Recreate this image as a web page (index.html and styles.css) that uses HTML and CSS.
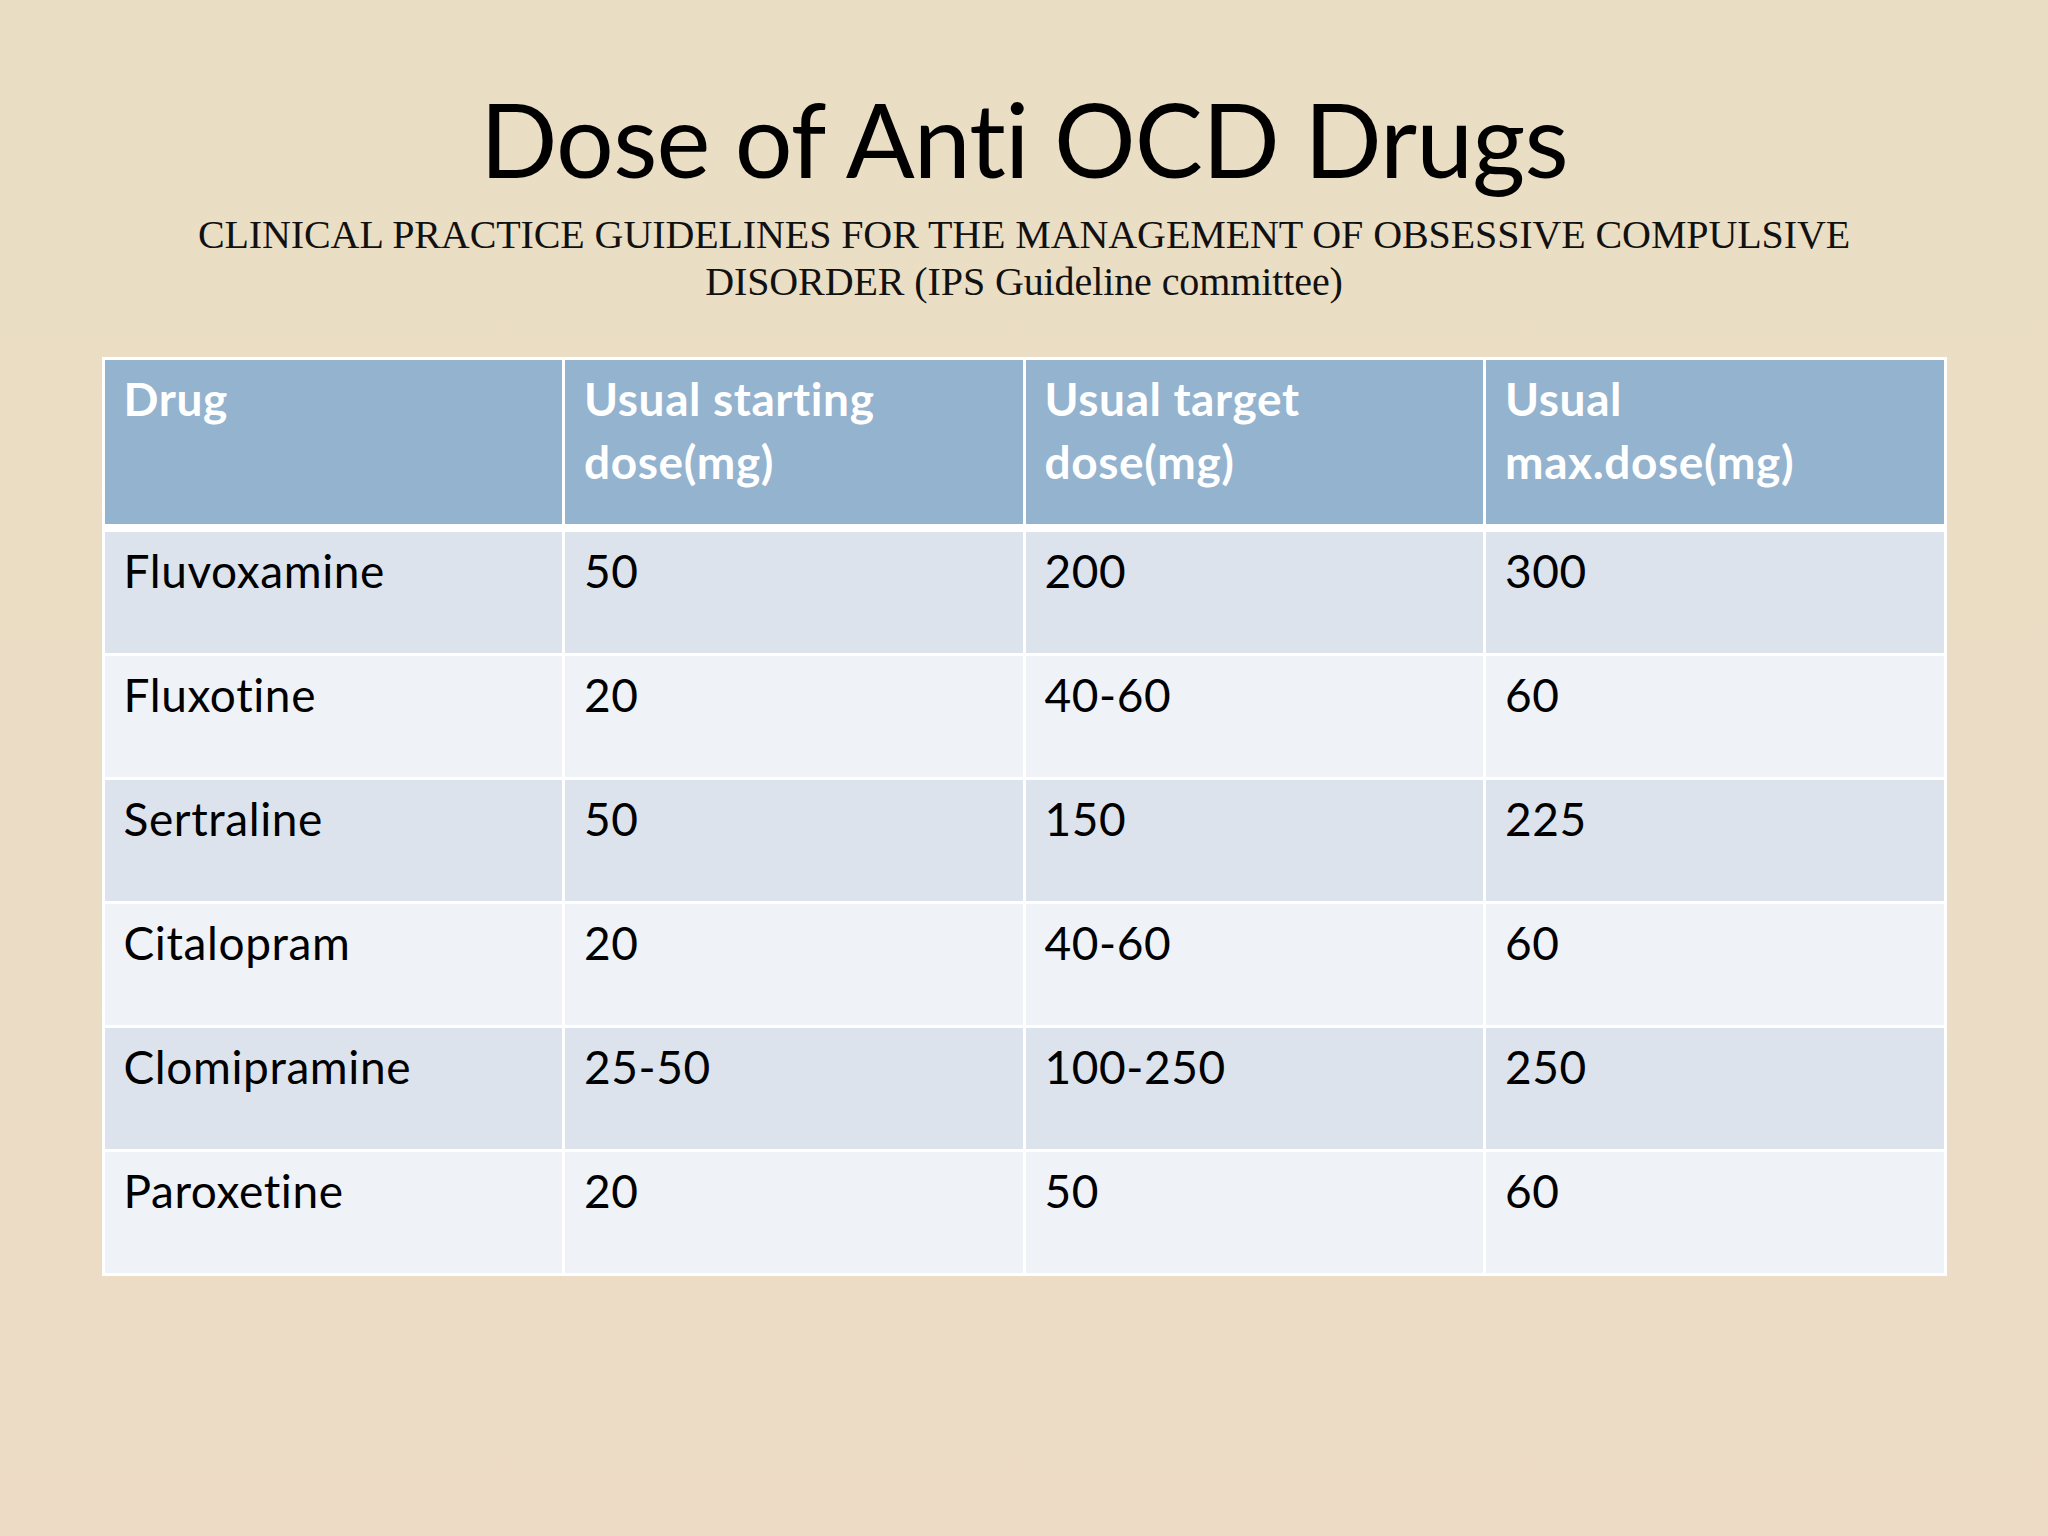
FILE: index.html
```html
<!DOCTYPE html>
<html lang="en">
<head>
<meta charset="utf-8">
<title>Dose of Anti OCD Drugs</title>
<link rel="stylesheet" href="styles.css">
</head>
<body>
<main class="slide">
  <header class="heading">
    <h1 class="title">Dose of Anti OCD Drugs</h1>
    <p class="subtitle">CLINICAL PRACTICE GUIDELINES FOR THE MANAGEMENT OF OBSESSIVE COMPULSIVE<br>DISORDER (IPS Guideline committee)</p>
  </header>
  <table class="doses">
    <thead>
      <tr class="head-row">
        <th>Drug</th>
        <th>Usual starting<br>dose(mg)</th>
        <th>Usual target<br>dose(mg)</th>
        <th>Usual<br>max.dose(mg)</th>
      </tr>
    </thead>
    <tbody>
      <tr class="odd"><td>Fluvoxamine</td><td>50</td><td>200</td><td>300</td></tr>
      <tr class="even"><td>Fluxotine</td><td>20</td><td>40-60</td><td>60</td></tr>
      <tr class="odd"><td>Sertraline</td><td>50</td><td>150</td><td>225</td></tr>
      <tr class="even"><td>Citalopram</td><td>20</td><td>40-60</td><td>60</td></tr>
      <tr class="odd"><td>Clomipramine</td><td>25-50</td><td>100-250</td><td>250</td></tr>
      <tr class="even"><td>Paroxetine</td><td>20</td><td>50</td><td>60</td></tr>
    </tbody>
  </table>
</main>
</body>
</html>
```

FILE: styles.css
```css
html, body {
  margin: 0;
  padding: 0;
}

body {
  width: 2048px;
  height: 1536px;
  overflow: hidden;
}

.slide {
  box-sizing: border-box;
  width: 2048px;
  height: 1536px;
  padding-top: 78px;
  background: linear-gradient(180deg, #e9dec4 0%, #ebddc5 50%, #eddbc6 100%);
  display: flex;
  flex-direction: column;
  align-items: center;
  font-variant-ligatures: none;
}

.heading {
  text-align: center;
}

.title {
  margin: 0;
  font-family: Lato, "Open Sans", sans-serif;
  font-weight: 400;
  font-size: 102px;
  line-height: 122px;
  letter-spacing: -0.8px;
  color: #000;
}

.subtitle {
  margin: 11px 0 0;
  font-family: "Liberation Serif", "Times New Roman", serif;
  font-size: 40px;
  line-height: 47px;
  color: #111;
  letter-spacing: -0.1px;
}

.doses {
  margin-top: 52px;
  width: 1845px;
  table-layout: fixed;
  border-collapse: separate;
  border-spacing: 3px;
  background: #fff;
  font-family: Lato, "Open Sans", sans-serif;
  font-size: 46px;
  line-height: 63px;
  letter-spacing: 0.6px;
}

.doses th,
.doses td {
  vertical-align: top;
  text-align: left;
  padding: 7px 20px 0 19px;
}

.head-row {
  height: 169px;
}

.head-row th {
  background: #94b3cf;
  color: #fff;
  font-weight: 700;
  border-bottom: 5px solid #fff;
}

.odd,
.even {
  height: 121px;
}

.odd td {
  background: #dce3ec;
  color: #000;
}

.even td {
  background: #eff2f6;
  color: #000;
}
```
